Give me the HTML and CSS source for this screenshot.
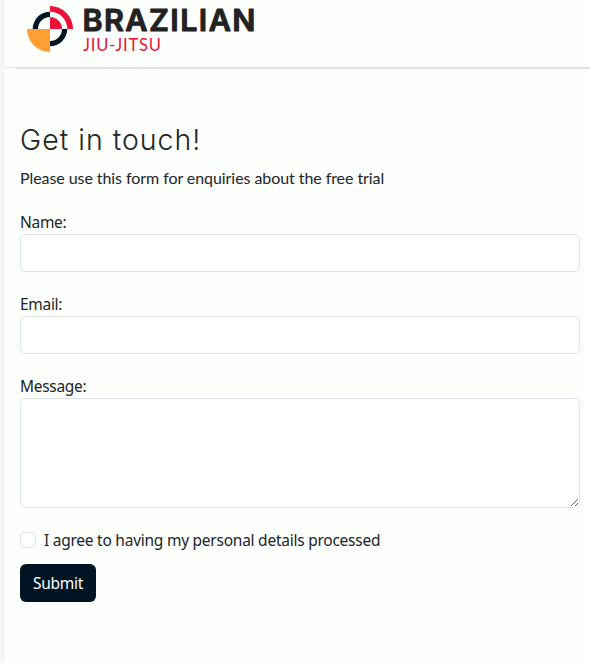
FILE: index.html
```
<!DOCTYPE html>
<html lang="en">
<head>
<meta charset="utf-8">
<title>Brazilian Jiu-Jitsu</title>
<link rel="stylesheet" href="styles.css">
</head>
<body>
<div class="page">
  <header class="header">
    <svg class="logo" width="240" height="67" viewBox="0 0 240 67" role="img" aria-label="Brazilian Jiu-Jitsu">
      <path fill="#eb1237" d="M30 6a23 23 0 0 1 23 23h-5.700a17.300 17.300 0 0 0-17.300-17.300zM30 17a12 12 0 0 1 12 12H30z"/>
      <path fill="#001523" d="M12.700 29A17.300 17.300 0 0 1 30 11.700V17a12 12 0 0 0-12 12zM47.300 29A17.300 17.300 0 0 1 30 46.300V41a12 12 0 0 0 12-12z"/>
      <path fill="#ff9f31" d="M30 29v23A23 23 0 0 1 7 29z"/>
      <text class="brand" x="62.500" y="30.500" textLength="173" lengthAdjust="spacing">BRAZILIAN</text>
      <text class="sub" x="63" y="51" textLength="78" lengthAdjust="spacing">JIU-JITSU</text>
    </svg>
  </header>
  <main class="content">
    <h1>Get in touch!</h1>
    <p class="intro">Please use this form for enquiries about the free trial</p>
    <form>
      <label class="label" for="name">Name:</label>
      <input class="field" id="name" type="text">
      <label class="label" for="email">Email:</label>
      <input class="field" id="email" type="email">
      <label class="label" for="message">Message:</label>
      <textarea class="field message" id="message"></textarea>
      <div class="check">
        <input class="box" id="agree" type="checkbox">
        <label class="agree" for="agree">I agree to having my personal details processed</label>
      </div>
      <button class="submit" type="submit">Submit</button>
    </form>
  </main>
</div>
</body>
</html>
```
FILE: styles.css
```
* { box-sizing: border-box; }
html { height: 100%; overflow: hidden; background: #f5f5f5; }
body { margin: 0; height: 100%; color: #212529; font: 16px/24px "Noto Sans", sans-serif; }
.page { height: 663px; margin-left: 5px; background: #fdfffd; }
.header {
  height: 69px;
  padding-left: 15px;
  background:
    linear-gradient(#dee2e6, #dee2e6) 0 67px / 12px 1px no-repeat,
    linear-gradient(#dee2e6, #dee2e6) 12px 67px / 100% 2px no-repeat;
}
.logo { display: block; }
.brand { font: 600 30.500px "Inter", sans-serif; fill: #222; stroke: #222; stroke-width: 1; stroke-linejoin: round; }
.sub { font: 400 16.500px "Lato", sans-serif; fill: #eb1237; }
.content { padding: 53px 10px 0 15px; }
h1 { margin: 0 0 8px; font: 300 28.500px/36px "Inter", sans-serif; letter-spacing: 1px; }
.intro { margin: 0 0 20px; font-family: "Lato", sans-serif; line-height: 24px; letter-spacing: -.07px; }
form { display: block; }
.label { display: block; width: max-content; font-size: 15.500px; line-height: 24px; letter-spacing: -.3px; }
.field {
  display: block;
  width: 560px;
  height: 38px;
  margin: 0 0 20px;
  border: 1px solid #dee2e6;
  border-radius: 6px;
  background: #fff;
  font: inherit;
}
.message { height: 110px; margin-bottom: 20px; resize: vertical; }
.check { display: flex; align-items: center; gap: 8px; height: 24px; margin-bottom: 12px; }
.box { appearance: none; width: 16px; height: 16px; margin: 0; border: 1px solid #dee2e6; border-radius: 4px; background: #fff; }
.agree { font-size: 15.500px; letter-spacing: -.25px; white-space: nowrap; }
.submit { display: block; width: 76px; height: 38px; padding: 0; border: 0; border-radius: 6px; background: #001523; color: #fff; font: 15.500px/24px "Noto Sans", sans-serif; letter-spacing: -.25px; }
```
